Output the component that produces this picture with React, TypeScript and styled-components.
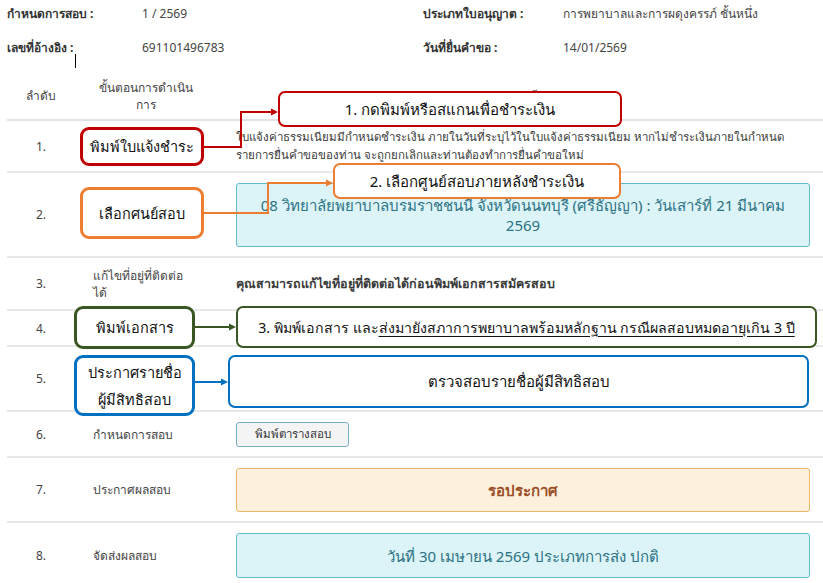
import React from 'react';
import styled, { createGlobalStyle } from 'styled-components';

const GlobalStyle = createGlobalStyle`
  html, body {
    margin: 0;
    padding: 0;
    background: #ffffff;
  }
  body {
    font-family: "Noto Sans", "DejaVu Sans", sans-serif;
    color: #333333;
  }
`;

type Tone = 'red' | 'orange' | 'green' | 'blue';

const toneColors: Record<Tone, string> = {
  red: '#c00000',
  orange: '#ed7d31',
  green: '#385723',
  blue: '#0070c0',
};

const Page = styled.div`
  position: relative;
  width: 823px;
  height: 583px;
  overflow: hidden;
  background: #ffffff;
`;

const InfoGrid = styled.div`
  display: grid;
  grid-template-columns: 135px 281px 140px auto;
  row-gap: 16px;
  padding: 5px 0 0 7px;
  font-size: 12px;
  line-height: 18px;
`;

const InfoLabel = styled.div`
  font-weight: bold;
  color: #333333;
`;

const InfoValue = styled.div`
  color: #444444;
`;

const Steps = styled.table`
  margin: 15px 0 0 7px;
  width: 816px;
  border-collapse: collapse;
  table-layout: fixed;
  font-size: 12px;
  line-height: 17px;
`;

const Col = styled.col<{ $w?: number }>`
  width: ${({ $w }) => ($w ? `${$w}px` : 'auto')};
`;

const HeadCell = styled.th<{ $col: number }>`
  height: 47px;
  font-weight: normal;
  text-align: center;
  vertical-align: middle;
  border-bottom: 2px solid #e2e2e2;
  color: #444444;
  padding: ${({ $col }) => ($col === 2 ? '0 30px 0 18px' : $col === 3 ? '0 13px 0 8px' : '0')};
`;

const Row = styled.tr<{ $h: number }>`
  height: ${({ $h }) => $h}px;
  & > td {
    border-top: 2px solid #e8e8e8;
  }
`;

const NumCell = styled.td`
  text-align: center;
  vertical-align: middle;
  color: #444444;
`;

const StepCell = styled.td`
  padding: 0 8px 0 18px;
  vertical-align: middle;
  color: #444444;
`;

const DetailCell = styled.td`
  padding: 0 13px 0 8px;
  vertical-align: middle;
`;

const Note = styled.div<{ $strong?: boolean }>`
  font-size: ${({ $strong }) => ($strong ? 12.5 : 11.5)}px;
  line-height: 18px;
  white-space: nowrap;
  font-weight: ${({ $strong }) => ($strong ? 'bold' : 'normal')};
  color: #3a3a3a;
`;

const Alert = styled.div<{ $kind: 'info' | 'warning'; $h: number }>`
  box-sizing: border-box;
  height: ${({ $h }) => $h}px;
  display: flex;
  align-items: center;
  justify-content: center;
  text-align: center;
  white-space: nowrap;
  border-radius: 3px;
  padding: 0 12px;
  font-size: 15px;
  line-height: 20px;
  background: ${({ $kind }) => ($kind === 'info' ? '#dcf4f8' : '#fdf0dc')};
  border: 1px solid ${({ $kind }) => ($kind === 'info' ? '#62bccb' : '#e9b967')};
  color: ${({ $kind }) => ($kind === 'info' ? '#2b7283' : '#9a4f27')};
  font-weight: ${({ $kind }) => ($kind === 'warning' ? 600 : 'normal')};
`;

const PrintButton = styled.button`
  box-sizing: border-box;
  width: 113px;
  height: 25px;
  font-family: inherit;
  font-size: 11.5px;
  color: #333333;
  background: #f4f4f4;
  border: 1px solid #7aaecb;
  border-radius: 3px;
`;

const Caret = styled.div`
  position: absolute;
  left: 75px;
  top: 54px;
  width: 1px;
  height: 14px;
  background: #000000;
`;

/* annotation boxes drawn on top of the steps table */
const Callout = styled.div<{ $tone: Tone; $x: number; $y: number; $w: number; $h: number; $thick?: boolean; $size?: number }>`
  position: absolute;
  box-sizing: border-box;
  left: ${({ $x }) => $x}px;
  top: ${({ $y }) => $y}px;
  width: ${({ $w }) => $w}px;
  height: ${({ $h }) => $h}px;
  border: ${({ $thick }) => ($thick ? 3 : 2)}px solid ${({ $tone }) => toneColors[$tone]};
  border-radius: ${({ $thick }) => ($thick ? 9 : 7)}px;
  background: #ffffff;
  display: flex;
  align-items: center;
  justify-content: center;
  text-align: center;
  white-space: nowrap;
  font-size: ${({ $size }) => $size ?? 15}px;
  line-height: 27px;
  color: #111111;
`;

const Underlined = styled.span`
  text-decoration: underline;
  text-underline-offset: 3px;
`;

const Connectors = styled.svg`
  position: absolute;
  left: 0;
  top: 0;
  pointer-events: none;
`;

const Arrow: React.FC<{ points: string; tip: [number, number]; color: string }> = ({ points, tip, color }) => {
  const [x, y] = tip;
  return (
    <g>
      <polyline points={points} fill="none" stroke={color} strokeWidth={2} />
      <polygon points={`${x},${y} ${x - 7},${y - 3.5} ${x - 7},${y + 3.5}`} fill={color} />
    </g>
  );
};

const App: React.FC = () => {
  return (
    <Page>
      <GlobalStyle />
      <InfoGrid>
        <InfoLabel>กำหนดการสอบ :</InfoLabel>
        <InfoValue>1 / 2569</InfoValue>
        <InfoLabel>ประเภทใบอนุญาต :</InfoLabel>
        <InfoValue>การพยาบาลและการผดุงครรภ์ ชั้นหนึ่ง</InfoValue>
        <InfoLabel>เลขที่อ้างอิง :</InfoLabel>
        <InfoValue>691101496783</InfoValue>
        <InfoLabel>วันที่ยื่นคำขอ :</InfoLabel>
        <InfoValue>14/01/2569</InfoValue>
      </InfoGrid>
      <Caret />

      <Steps>
        <colgroup>
          <Col $w={68} />
          <Col $w={153} />
          <Col />
        </colgroup>
        <thead>
          <tr>
            <HeadCell $col={1}>ลำดับ</HeadCell>
            <HeadCell $col={2}>ขั้นตอนการดำเนิน<br />การ</HeadCell>
            <HeadCell $col={3}>รายละเอียด</HeadCell>
          </tr>
        </thead>
        <tbody>
          <Row $h={52}>
            <NumCell>1.</NumCell>
            <StepCell>พิมพ์ใบแจ้งชำระ</StepCell>
            <DetailCell>
              <Note>
                ใบแจ้งค่าธรรมเนียมมีกำหนดชำระเงิน ภายในวันที่ระบุไว้ในใบแจ้งค่าธรรมเนียม หากไม่ชำระเงินภายในกำหนด
                <br />
                รายการยื่นคำขอของท่าน จะถูกยกเลิกและท่านต้องทำการยื่นคำขอใหม่
              </Note>
            </DetailCell>
          </Row>
          <Row $h={85}>
            <NumCell>2.</NumCell>
            <StepCell>เลือกศูนย์สอบ</StepCell>
            <DetailCell>
              <Alert $kind="info" $h={64}>
                08 วิทยาลัยพยาบาลบรมราชชนนี จังหวัดนนทบุรี (ศรีธัญญา) : วันเสาร์ที่ 21 มีนาคม
                <br />
                2569
              </Alert>
            </DetailCell>
          </Row>
          <Row $h={53}>
            <NumCell>3.</NumCell>
            <StepCell>แก้ไขที่อยู่ที่ติดต่อ<br />ได้</StepCell>
            <DetailCell>
              <Note $strong>คุณสามารถแก้ไขที่อยู่ที่ติดต่อได้ก่อนพิมพ์เอกสารสมัครสอบ</Note>
            </DetailCell>
          </Row>
          <Row $h={36}>
            <NumCell>4.</NumCell>
            <StepCell>พิมพ์เอกสาร</StepCell>
            <DetailCell />
          </Row>
          <Row $h={65}>
            <NumCell>5.</NumCell>
            <StepCell>ประกาศรายชื่อ<br />ผู้มีสิทธิสอบ</StepCell>
            <DetailCell />
          </Row>
          <Row $h={46}>
            <NumCell>6.</NumCell>
            <StepCell>กำหนดการสอบ</StepCell>
            <DetailCell>
              <PrintButton>พิมพ์ตารางสอบ</PrintButton>
            </DetailCell>
          </Row>
          <Row $h={65}>
            <NumCell>7.</NumCell>
            <StepCell>ประกาศผลสอบ</StepCell>
            <DetailCell>
              <Alert $kind="warning" $h={44}>รอประกาศ</Alert>
            </DetailCell>
          </Row>
          <Row $h={66}>
            <NumCell>8.</NumCell>
            <StepCell>จัดส่งผลสอบ</StepCell>
            <DetailCell>
              <Alert $kind="info" $h={45}>วันที่ 30 เมษายน 2569 ประเภทการส่ง ปกติ</Alert>
            </DetailCell>
          </Row>
        </tbody>
      </Steps>

      <Connectors width={823} height={583}>
        <Arrow points="204,147 241,147 241,112 272,112" tip={[278, 112]} color={toneColors.red} />
        <Arrow points="204,213 268,213 268,183 327,183" tip={[333, 183]} color={toneColors.orange} />
        <Arrow points="195,327 230,327" tip={[236, 327]} color={toneColors.green} />
        <Arrow points="195,382 222,382" tip={[228, 382]} color={toneColors.blue} />
      </Connectors>

      <Callout $tone="red" $thick $x={80} $y={127} $w={124} $h={39} $size={14.5}>พิมพ์ใบแจ้งชำระ</Callout>
      <Callout $tone="red" $x={278} $y={91} $w={344} $h={36}>1. กดพิมพ์หรือสแกนเพื่อชำระเงิน</Callout>

      <Callout $tone="orange" $thick $x={80} $y={187} $w={124} $h={52} $size={14.5}>เลือกศนย์สอบ</Callout>
      <Callout $tone="orange" $x={333} $y={163} $w={288} $h={36}>2. เลือกศูนย์สอบภายหลังชำระเงิน</Callout>

      <Callout $tone="green" $thick $x={74} $y={306} $w={121} $h={43} $size={14.5}>พิมพ์เอกสาร</Callout>
      <Callout $tone="green" $x={236} $y={306} $w={581} $h={42} $size={14.2}>
        3. พิมพ์เอกสาร และ<Underlined>ส่งมายังสภาการพยาบาลพร้อมหลักฐาน กรณีผลสอบหมดอายุเกิน 3 ปี</Underlined>
      </Callout>

      <Callout $tone="blue" $thick $x={74} $y={355} $w={121} $h={61} $size={14.5}>ประกาศรายชื่อ<br />ผู้มีสิทธิสอบ</Callout>
      <Callout $tone="blue" $x={228} $y={355} $w={581} $h={53}>ตรวจสอบรายชื่อผู้มีสิทธิสอบ</Callout>
    </Page>
  );
};

export default App;
